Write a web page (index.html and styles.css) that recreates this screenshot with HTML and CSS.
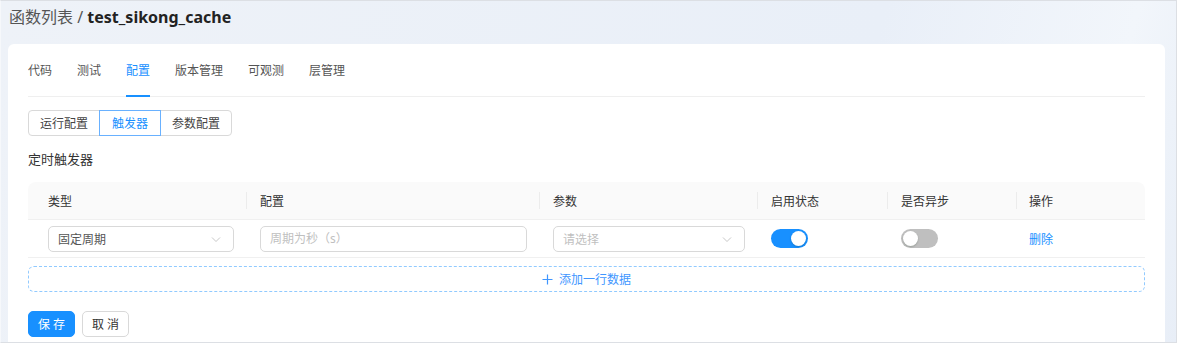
FILE: index.html
```html
<!DOCTYPE html>
<html lang="zh-CN">
<head>
    <meta charset="UTF-8">
    <meta name="viewport" content="width=device-width, initial-scale=1.0">
    <title>test_sikong_cache</title>
    <link rel="stylesheet" href="styles.css">
</head>
<body>
  <div class="app">
    <h1 class="page-title"><span class="crumb">函数列表 /</span> <span class="fn-name">test_sikong_cache</span></h1>

    <div class="card">
      <nav class="tabs">
        <a class="tab">代码</a>
        <a class="tab">测试</a>
        <a class="tab active">配置</a>
        <a class="tab">版本管理</a>
        <a class="tab">可观测</a>
        <a class="tab">层管理</a>
      </nav>

      <div class="segmented">
        <button class="seg-button">运行配置</button>
        <button class="seg-button active">触发器</button>
        <button class="seg-button">参数配置</button>
      </div>

      <h3 class="section-title">定时触发器</h3>

      <table class="trigger-table">
        <colgroup>
          <col style="width: 219px">
          <col style="width: 293px">
          <col style="width: 218px">
          <col style="width: 130px">
          <col style="width: 129px">
          <col style="width: 128px">
        </colgroup>
        <thead>
          <tr>
            <th>类型</th>
            <th>配置</th>
            <th>参数</th>
            <th>启用状态</th>
            <th>是否异步</th>
            <th>操作</th>
          </tr>
        </thead>
        <tbody>
          <tr>
            <td>
              <div class="select">
                <span class="select-value">固定周期</span>
                <svg class="chevron" width="12" height="12" viewBox="0 0 12 12"><path d="M2 4.5l4 4 4-4" fill="none" stroke="#bfbfbf" stroke-width="0.9"/></svg>
              </div>
            </td>
            <td>
              <input class="input" type="text" placeholder="周期为秒（s）">
            </td>
            <td>
              <div class="select">
                <span class="select-placeholder">请选择</span>
                <svg class="chevron" width="12" height="12" viewBox="0 0 12 12"><path d="M2 4.5l4 4 4-4" fill="none" stroke="#bfbfbf" stroke-width="0.9"/></svg>
              </div>
            </td>
            <td><span class="switch on"><span class="knob"></span></span></td>
            <td><span class="switch"><span class="knob"></span></span></td>
            <td><a class="link">删除</a></td>
          </tr>
        </tbody>
      </table>

      <button class="add-row">
        <svg width="11" height="11" viewBox="0 0 11 11"><path d="M5.5 0.5v10M0.5 5.5h10" stroke="currentColor" stroke-width="1.2"/></svg>
        添加一行数据
      </button>

      <div class="form-actions">
        <button class="btn btn-primary">保 存</button>
        <button class="btn">取 消</button>
      </div>
    </div>
  </div>
</body>
</html>
```

FILE: styles.css
```css
* {
  box-sizing: border-box;
}

body {
  margin: 0;
  font-family: "Noto Sans", "Noto Sans CJK SC", sans-serif;
  color: #333;
}

.app {
  height: 343px;
  overflow: hidden;
  border: 1px solid #dcdfe4;
  border-left-color: #f6f8fb;
  padding: 0 11px 0 7px;
  background: linear-gradient(105deg, #eef2f8 0%, #e9eff8 70%, #f2f6fb 90%, #e8eef7 100%);
}

.page-title {
  margin: 0;
  padding: 5px 0 16px 1px;
  font-size: 16px;
  line-height: 22px;
  font-weight: normal;
}

.crumb {
  color: #555;
}

.fn-name {
  color: #222;
  font-weight: bold;
}

.card {
  background: #fff;
  border-radius: 6px 6px 0 0;
  padding: 0 20px 30px;
}

.tabs {
  display: flex;
  gap: 25px;
  border-bottom: 1px solid #efefef;
}

.tab {
  position: relative;
  padding: 17px 0 15px;
  font-size: 12px;
  line-height: 20px;
  color: #555;
  cursor: pointer;
}

.tab.active {
  color: #1890ff;
}

.tab.active::after {
  content: "";
  position: absolute;
  left: 0;
  right: 0;
  bottom: -1px;
  height: 2px;
  background: #1890ff;
}

.segmented {
  display: flex;
  margin-top: 13px;
}

.seg-button {
  height: 26px;
  padding: 0 11px;
  font-family: inherit;
  font-size: 12px;
  color: #444;
  background: #fff;
  border: 1px solid #d9d9d9;
  margin-left: -1px;
  cursor: pointer;
}

.seg-button:first-child {
  margin-left: 0;
  border-radius: 4px 0 0 4px;
  width: 72px;
}

.seg-button:last-child {
  border-radius: 0 4px 4px 0;
  width: 72px;
}

.seg-button.active {
  position: relative;
  width: 62px;
  color: #1890ff;
  border-color: #69b1ff;
}

.section-title {
  margin: 12px 0;
  font-size: 13px;
  line-height: 22px;
  font-weight: normal;
  color: #333;
}

.trigger-table {
  width: 100%;
  table-layout: fixed;
  border-collapse: separate;
  border-spacing: 0;
  font-size: 12px;
}

.trigger-table th {
  position: relative;
  height: 37px;
  padding: 0 13px;
  text-align: left;
  font-weight: normal;
  color: #333;
  background: #fafafa;
}

.trigger-table th:first-child {
  padding-left: 20px;
  border-top-left-radius: 8px;
}

.trigger-table th:last-child {
  padding-left: 12px;
  border-top-right-radius: 8px;
}

.trigger-table th:not(:last-child)::after {
  content: "";
  position: absolute;
  right: 0;
  top: 10px;
  height: 17px;
  width: 1px;
  background: #ececec;
}

.trigger-table td {
  height: 39px;
  padding: 0 13px;
  border-top: 1px solid #f0f0f0;
  border-bottom: 1px solid #f0f0f0;
  vertical-align: middle;
}

.trigger-table td:first-child {
  padding-left: 20px;
}

.trigger-table td:last-child {
  padding-left: 12px;
}

.select,
.input {
  display: flex;
  align-items: center;
  width: 100%;
  height: 26px;
  padding: 0 9px;
  border: 1px solid #d9d9d9;
  border-radius: 5px;
  background: #fff;
  font-family: inherit;
  font-size: 12px;
}

.input::placeholder {
  color: #bfbfbf;
}

.select-value {
  flex: 1;
  color: #555;
}

.select-placeholder {
  flex: 1;
  color: #bfbfbf;
}

.chevron {
  margin-right: 2px;
}

.switch {
  position: relative;
  display: inline-block;
  width: 37px;
  height: 19px;
  border-radius: 10px;
  background: #bfbfbf;
  vertical-align: middle;
}

.switch.on {
  background: #1890ff;
}

.switch .knob {
  position: absolute;
  top: 2px;
  left: 2px;
  width: 15px;
  height: 15px;
  border-radius: 50%;
  background: #fff;
  box-shadow: 0 1px 2px rgba(0, 35, 11, 0.2);
}

.switch.on .knob {
  left: 20px;
}

.link {
  color: #1890ff;
  cursor: pointer;
}

.add-row {
  display: flex;
  align-items: center;
  justify-content: center;
  gap: 6px;
  width: 100%;
  height: 26px;
  margin-top: 8px;
  font-family: inherit;
  font-size: 12px;
  color: #4096ff;
  background: #fff;
  border: 1px dashed #91caff;
  border-radius: 6px;
  cursor: pointer;
}

.form-actions {
  display: flex;
  gap: 7px;
  margin-top: 19px;
}

.btn {
  height: 26px;
  width: 47px;
  padding: 0;
  font-family: inherit;
  font-size: 12px;
  color: #333;
  background: #fff;
  border: 1px solid #d9d9d9;
  border-radius: 5px;
  cursor: pointer;
}

.btn-primary {
  color: #fff;
  background: #1890ff;
  border-color: #1890ff;
}
```
